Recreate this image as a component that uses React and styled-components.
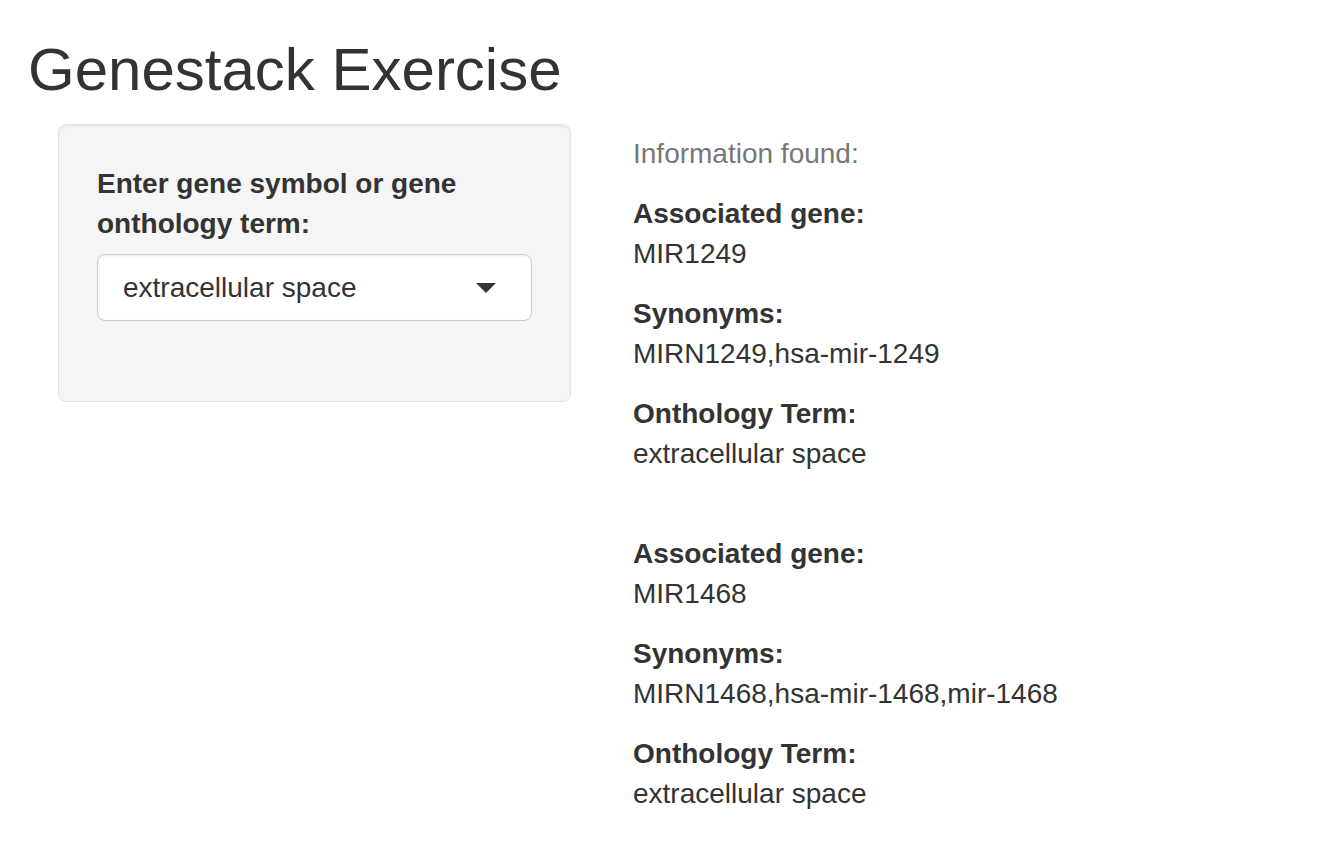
import React from "react";
import styled, { createGlobalStyle } from "styled-components";

const genes = [
  {
    id: "MIR1249",
    synonyms: "MIRN1249,hsa-mir-1249",
    term: "extracellular space",
  },
  {
    id: "MIR1468",
    synonyms: "MIRN1468,hsa-mir-1468,mir-1468",
    term: "extracellular space",
  },
];

const App = () => {
  return (
    <>
      <GlobalStyle />
      <Page>
        <Title>Genestack Exercise</Title>
        <Row>
          <Sidebar>
            <Well>
              <FormGroup>
                <Label>Enter gene symbol or gene onthology term:</Label>
                <SelectBox>
                  <SelectValue>extracellular space</SelectValue>
                  <Caret />
                </SelectBox>
              </FormGroup>
            </Well>
          </Sidebar>
          <Main>
            <InfoHeading>Information found:</InfoHeading>
            {genes.map((gene) => (
              <GeneBlock key={gene.id}>
                <Field>
                  <FieldName>Associated gene:</FieldName>
                  <FieldValue>{gene.id}</FieldValue>
                </Field>
                <Field>
                  <FieldName>Synonyms:</FieldName>
                  <FieldValue>{gene.synonyms}</FieldValue>
                </Field>
                <Field>
                  <FieldName>Onthology Term:</FieldName>
                  <FieldValue>{gene.term}</FieldValue>
                </Field>
              </GeneBlock>
            ))}
          </Main>
        </Row>
      </Page>
    </>
  );
};

export default App;

const GlobalStyle = createGlobalStyle`
  body {
    margin: 0;
    background: #fff;
    color: #333;
    font-family: "Liberation Sans", Arial, Helvetica, sans-serif;
    font-size: 28px;
    line-height: 40px;
  }
  * {
    box-sizing: border-box;
  }
`;

const Page = styled.div`
  padding-left: 28px;
`;

const Title = styled.h2`
  margin: 37px 0 21px;
  font-size: 60px;
  font-weight: 500;
  line-height: 1.1;
  color: #333;
`;

const Row = styled.div`
  display: flex;
  align-items: flex-start;
`;

const Sidebar = styled.div`
  width: 513px;
  margin-left: 30px;
  flex-shrink: 0;
`;

const Well = styled.div`
  background: #f5f5f5;
  border: 1px solid #e3e3e3;
  border-radius: 8px;
  box-shadow: inset 0 2px 2px rgba(0, 0, 0, 0.05);
  padding: 39px 38px 38px;
`;

const FormGroup = styled.div`
  margin-bottom: 42px;
`;

const Label = styled.label`
  display: block;
  font-weight: bold;
  margin-bottom: 10px;
`;

const SelectBox = styled.div`
  display: flex;
  align-items: center;
  justify-content: space-between;
  background: #fff;
  border: 1px solid #ccc;
  border-radius: 8px;
  box-shadow: inset 0 1px 2px rgba(0, 0, 0, 0.08);
  padding: 13px 25px 12px 25px;
`;

const SelectValue = styled.span`
  color: #333;
`;

const Caret = styled.span`
  width: 0;
  height: 0;
  margin-right: 10px;
  border-style: solid;
  border-width: 10px 10px 0 10px;
  border-color: #333 transparent transparent transparent;
`;

const Main = styled.div`
  margin-left: 62px;
  padding-top: 10px;
`;

const InfoHeading = styled.div`
  color: #777;
  margin-bottom: 20px;
`;

const GeneBlock = styled.div`
  & + & {
    padding-top: 40px;
  }
`;

const Field = styled.div`
  margin-bottom: 20px;
`;

const FieldName = styled.div`
  font-weight: bold;
`;

const FieldValue = styled.div``;
